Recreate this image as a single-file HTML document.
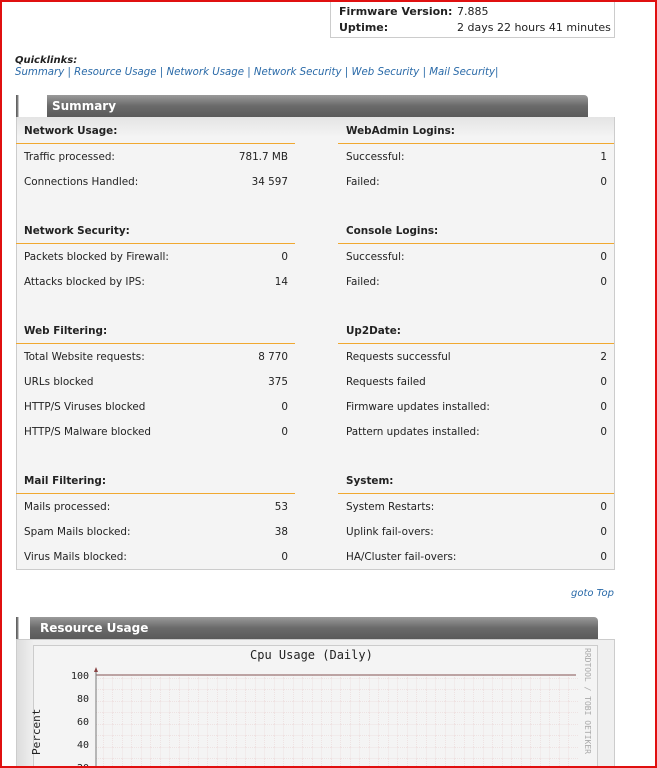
<!DOCTYPE html>
<html><head><meta charset="utf-8"><style>
*{margin:0;padding:0;box-sizing:border-box}
html{width:657px;height:768px;overflow:hidden}
body{width:657px;height:768px;overflow:hidden;background:#fff;font-family:"DejaVu Sans",Verdana,sans-serif;font-size:10.4px;color:#222;position:relative}
.frame{position:absolute;left:0;top:0;width:657px;height:768px;border:2px solid #e01010;z-index:10;pointer-events:none}
.abs{position:absolute;white-space:nowrap}
.b{font-weight:bold}
a{color:#2a6aa8;font-style:italic;text-decoration:none}
.line{position:absolute;height:1px;background:#f0a830}
.hdr{position:absolute;height:22px;border-radius:0 4px 0 0;background:linear-gradient(#9a9a9a,#6a6a6a 50%,#5a5a5a);color:#fff;font-weight:bold;font-size:12px;line-height:22px;padding-left:5px}
.tab{position:absolute;height:22px;background:linear-gradient(90deg,#555 0,#888 2px,#fff 3px)}
</style></head><body>
<div class="frame"></div>
<div class="abs" style="left:330px;top:0;width:285px;height:38px;border:1px solid #ccc;border-top:none;background:#fff"></div>
<div class="abs b" style="left:339px;top:5px;font-size:11px">Firmware Version:</div>
<div class="abs" style="left:457px;top:5px;font-size:11px">7.885</div>
<div class="abs b" style="left:339px;top:21px;font-size:11px">Uptime:</div>
<div class="abs" style="left:457px;top:21px;font-size:11px">2 days 22 hours 41 minutes</div>

<div class="abs b" style="left:15px;top:55px;font-style:italic;font-size:10px">Quicklinks:</div>
<div class="abs" style="left:15px;top:67px;color:#2a6aa8;font-size:10.2px"><a>Summary</a> | <a>Resource Usage</a> | <a>Network Usage</a> | <a>Network Security</a> | <a>Web Security</a> | <a>Mail Security</a>|</div>

<div class="tab" style="left:16px;top:95px;width:32px"></div>
<div class="hdr" style="left:47px;top:95px;width:541px">Summary</div>
<div class="abs" style="left:16px;top:117px;width:599px;height:453px;background:linear-gradient(#e4e4e4,#f4f4f4 20px,#f4f4f4);border:1px solid #ccc;border-top:none"></div>

<div id="s"></div>

<div class="abs" style="left:571px;top:588px;font-size:10px"><a>goto Top</a></div>

<div class="tab" style="left:16px;top:617px;width:16px"></div>
<div class="hdr" style="left:30px;top:617px;width:568px;padding-left:10px">Resource Usage</div>
<div class="abs" style="left:16px;top:639px;width:599px;height:129px;background:linear-gradient(90deg,#ddd,#f0f0f0 17px,#f0f0f0);border:1px solid #ccc;border-bottom:none"></div>
<div class="abs" style="left:33px;top:645px;width:565px;height:123px;background:#f4f4f4;border:1px solid #ccc;border-bottom:none"></div>
<div class="abs" style="left:250px;top:648px;font-family:'DejaVu Sans Mono',monospace;font-size:12px;color:#222">Cpu Usage (Daily)</div>
<div class="abs" style="left:583px;top:648px;writing-mode:vertical-rl;font-family:'DejaVu Sans Mono',monospace;font-size:8px;color:#aaa">RRDTOOL / TOBI OETIKER</div>
<div class="abs" style="left:30px;top:755px;transform:rotate(-90deg);transform-origin:0 0;font-family:'DejaVu Sans Mono',monospace;font-size:11px">Percent</div>
<svg class="abs" style="left:60px;top:665px" width="400" height="103">
<g font-family="DejaVu Sans Mono" font-size="10" fill="#222" text-anchor="end">
<text x="29" y="14">100</text><text x="29" y="37">80</text><text x="29" y="60">60</text><text x="29" y="83">40</text><text x="29" y="106">20</text></g>
</svg>
<svg class="abs" style="left:94px;top:667px" width="484" height="101">
<defs><pattern id="g" width="9.5" height="11.5" patternUnits="userSpaceOnUse"><path d="M9.5 0V11.5M0 11.5H9.5" stroke="#e8d0d0" stroke-width="1" stroke-dasharray="1 1"/></pattern></defs>
<rect x="2" y="8" width="482" height="102" fill="url(#g)"/>
<line x1="2" y1="8" x2="482" y2="8" stroke="#a88" stroke-width="1.5"/>
<line x1="2" y1="3" x2="2" y2="110" stroke="#777"/>
<path d="M0 5L2 0L4 5Z" fill="#844"/>
</svg>

<script>
var L=[["Network Usage:",[["Traffic processed:","781.7 MB"],["Connections Handled:","34 597"]]],
["Network Security:",[["Packets blocked by Firewall:","0"],["Attacks blocked by IPS:","14"]]],
["Web Filtering:",[["Total Website requests:","8 770"],["URLs blocked","375"],["HTTP/S Viruses blocked","0"],["HTTP/S Malware blocked","0"]]],
["Mail Filtering:",[["Mails processed:","53"],["Spam Mails blocked:","38"],["Virus Mails blocked:","0"]]]];
var R=[["WebAdmin Logins:",[["Successful:","1"],["Failed:","0"]]],
["Console Logins:",[["Successful:","0"],["Failed:","0"]]],
["Up2Date:",[["Requests successful","2"],["Requests failed","0"],["Firmware updates installed:","0"],["Pattern updates installed:","0"]]],
["System:",[["System Restarts:","0"],["Uplink fail-overs:","0"],["HA/Cluster fail-overs:","0"]]]];
var tops=[130,230,330,480],h="";
function col(d,x,w){d.forEach(function(s,i){var t=tops[i]-6;
h+='<div class="abs b" style="left:'+(x+8)+'px;top:'+(t+1)+'px">'+s[0]+'</div>';
h+='<div class="line" style="left:'+x+'px;top:'+(tops[i]+13)+'px;width:'+w+'px"></div>';
s[1].forEach(function(r,j){var y=t+27+25*j;
h+='<div class="abs" style="left:'+(x+8)+'px;top:'+y+'px">'+r[0]+'</div>';
h+='<div class="abs" style="left:'+x+'px;width:'+(w-7)+'px;text-align:right;top:'+y+'px">'+r[1]+'</div>';});});}
col(L,16,279);col(R,338,276);
document.getElementById('s').innerHTML=h;
</script>
</body></html>
